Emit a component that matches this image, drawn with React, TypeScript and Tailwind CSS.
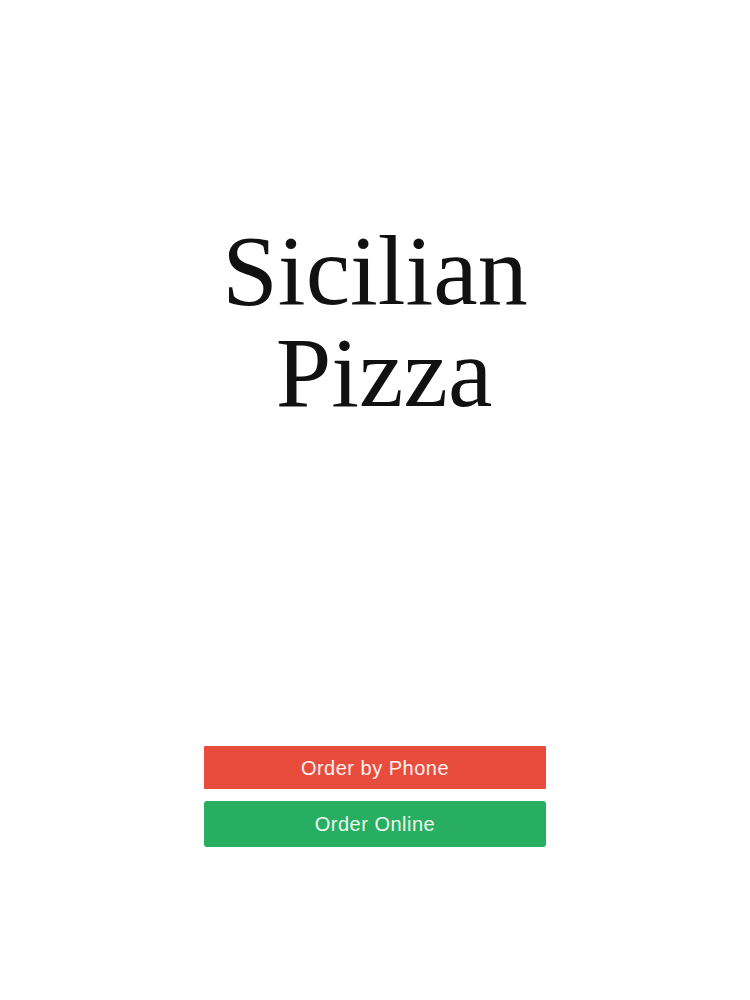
export default function App() {
  return (
    <div className="min-h-screen w-full bg-white flex flex-col items-center">
      <h1 className="pt-[220px] text-center text-[100px] leading-[102px] text-[#111] font-normal font-['Liberation_Serif','Times_New_Roman',serif]">
        <span className="block">Sicilian</span>
        <span className="block pl-[18px]">Pizza</span>
      </h1>

      <div className="mt-[322px] w-[342px] flex flex-col gap-[12px] font-['Liberation_Sans',Arial,sans-serif]">
        <button className="h-[43px] w-full bg-[#e74c3c] text-[#fdf1ef] text-[20px] tracking-[0.5px] rounded-[1px]">
          Order by Phone
        </button>
        <button className="h-[46px] w-full bg-[#27ae60] text-[#eefaf2] text-[20px] tracking-[0.5px] rounded-[3px]">
          Order Online
        </button>
      </div>
    </div>
  )
}
